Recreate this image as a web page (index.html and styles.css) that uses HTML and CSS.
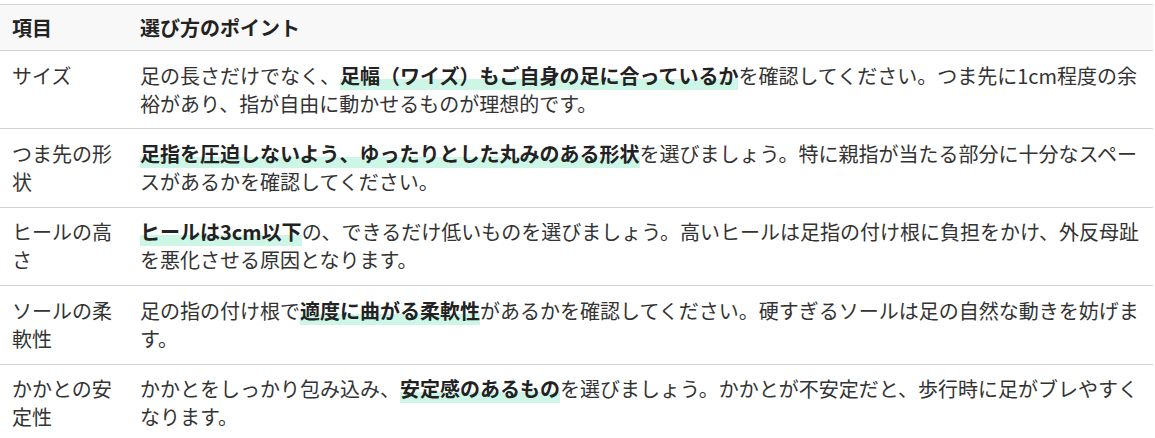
FILE: index.html
```html
<!DOCTYPE html>
<html lang="ja">
<head>
<meta charset="utf-8">
<title>靴の選び方</title>
<link rel="stylesheet" href="styles.css">
</head>
<body>
<table class="guide">
  <thead>
    <tr><th class="col-item">項目</th><th>選び方のポイント</th></tr>
  </thead>
  <tbody>
    <tr><td>サイズ</td><td>足の長さだけでなく、<strong class="mark">足幅（ワイズ）もご自身の足に合っているか</strong>を確認してください。つま先に1cm程度の余裕があり、指が自由に動かせるものが理想的です。</td></tr>
    <tr><td>つま先の形状</td><td><strong class="mark">足指を圧迫しないよう、ゆったりとした丸みのある形状</strong>を選びましょう。特に親指が当たる部分に十分なスペースがあるかを確認してください。</td></tr>
    <tr><td>ヒールの高さ</td><td><strong class="mark">ヒールは3cm以下</strong>の、できるだけ低いものを選びましょう。高いヒールは足指の付け根に負担をかけ、外反母趾を悪化させる原因となります。</td></tr>
    <tr><td>ソールの柔軟性</td><td>足の指の付け根で<strong class="mark">適度に曲がる柔軟性</strong>があるかを確認してください。硬すぎるソールは足の自然な動きを妨げます。</td></tr>
    <tr><td>かかとの安定性</td><td>かかとをしっかり包み込み、<strong class="mark">安定感のあるもの</strong>を選びましょう。かかとが不安定だと、歩行時に足がブレやすくなります。</td></tr>
  </tbody>
</table>
</body>
</html>
```
FILE: styles.css
```css
html, body {
  margin: 0;
  padding: 0;
  background: #ffffff;
}
body {
  padding-top: 4px;
  font-family: "Noto Sans CJK JP", "Noto Sans", sans-serif;
  font-size: 15px;
  color: #333333;
}
.guide {
  width: 1153px;
  border-collapse: collapse;
  table-layout: fixed;
  letter-spacing: 0;
  line-height: 28px;
  font-size: 20px;
}
.guide th,
.guide td {
  text-align: left;
  vertical-align: top;
  padding: 10.7px 12px;
  border-top: 1px solid #d2d2d2;
  border-bottom: 1px solid #d2d2d2;
}
.guide th {
  background: #f8f8f8;
  color: #222222;
  font-weight: 700;
  padding-top: 8.5px;
  padding-bottom: 8.5px;
}
.col-item {
  width: 104px;
}
.mark {
  font-weight: 700;
  color: #222222;
  background: linear-gradient(transparent 62%, #cdf6e7 62%);
}
```
